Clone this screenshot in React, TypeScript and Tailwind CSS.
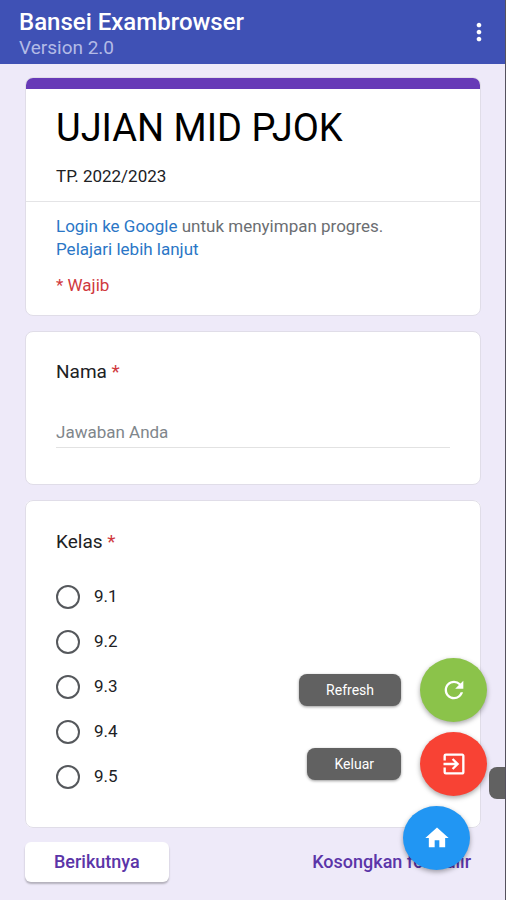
import { MdExitToApp, MdHome, MdMoreVert, MdRefresh } from "react-icons/md";

const classes = ["9.1", "9.2", "9.3", "9.4", "9.5"];

const actions = [
  { label: "Refresh", color: "bg-[#8bc34a]", icon: <MdRefresh size={28} /> },
  { label: "Keluar", color: "bg-[#f84234]", icon: <MdExitToApp size={28} /> },
];

const fab =
  "flex h-16 w-[67px] items-center justify-center rounded-[50%] text-white shadow-[0_2px_5px_rgba(0,0,0,0.35)]";
const card = "rounded-lg border border-[#e0dde8] bg-white";

function Header() {
  return (
    <header className="flex h-16 items-center justify-between bg-[#3f51b5] pr-3 pl-[19px]">
      <div className="pt-1">
        <h1 className="text-2xl leading-7 font-medium text-white">
          Bansei Exambrowser
        </h1>
        <p className="text-[19px] leading-6 text-[#b3bbe6]">Version 2.0</p>
      </div>
      <button type="button" aria-label="Menu" className="text-white">
        <MdMoreVert size={28} />
      </button>
    </header>
  );
}

function Required() {
  return <span className="text-[#d0393e]"> *</span>;
}

function FloatingActions() {
  return (
    <div className="absolute right-[18px] bottom-[30px] flex flex-col gap-[10px]">
      {actions.map((a) => (
        <div key={a.label} className="flex items-center justify-end gap-[19px]">
          <span className="rounded-lg bg-[#616161] px-[27px] py-[6px] text-sm leading-5 text-white shadow-[0_1px_3px_rgba(0,0,0,0.4)]">
            {a.label}
          </span>
          <button type="button" aria-label={a.label} className={`${fab} ${a.color}`}>
            {a.icon}
          </button>
        </div>
      ))}
      <button
        type="button"
        aria-label="Beranda"
        className={`${fab} mr-[17px] self-end bg-[#2196f3]`}
      >
        <MdHome size={28} />
      </button>
    </div>
  );
}

export default function App() {
  return (
    <div className="relative min-h-screen overflow-hidden border-r border-[#55525e] bg-[#eeeaf9] font-['Roboto','Liberation_Sans',sans-serif]">
      <Header />

      <form className="px-6 pt-[13px] pb-4 pl-[25px]" onSubmit={(e) => e.preventDefault()}>
        <section className={`${card} overflow-hidden`}>
          <div className="h-[11px] bg-[#673ab7]" />
          <div className="border-b border-[#e4e4e6] px-[30px] pt-4 pb-[13px]">
            <h2 className="text-[38px] leading-[46px] text-black">UJIAN MID PJOK</h2>
            <p className="mt-[13px] text-[17px] leading-6 text-[#202124]">TP. 2022/2023</p>
          </div>
          <div className="px-[30px] pt-[13px] pb-[18px] text-[17px] leading-[23px] text-[#6b6e72]">
            <p>
              <a href="#login" className="text-[#2a76c6]">
                Login ke Google
              </a>{" "}
              untuk menyimpan progres.
              <br />
              <a href="#info" className="text-[#2a76c6]">
                Pelajari lebih lanjut
              </a>
            </p>
            <p className="mt-[13px] text-[#d0393e]">* Wajib</p>
          </div>
        </section>

        <section className={`${card} mt-[15px] px-[30px] pt-7 pb-9`}>
          <label htmlFor="nama" className="block text-[19px] leading-6 text-[#202124]">
            Nama
            <Required />
          </label>
          <input
            id="nama"
            type="text"
            placeholder="Jawaban Anda"
            className="mt-8 block h-8 w-full border-b border-[#e2e2e2] text-[17px] text-[#202124] outline-none placeholder:text-[#80868b]"
          />
        </section>

        <fieldset className={`${card} mt-[15px] px-[30px] pt-[29px] pb-7`}>
          <legend className="float-left mb-5 w-full text-[19px] leading-6 text-[#202124]">
            Kelas
            <Required />
          </legend>
          {classes.map((c) => (
            <label
              key={c}
              className="clear-both flex h-[45px] items-center gap-[14px] text-[17px] text-[#202124]"
            >
              <input
                type="radio"
                name="kelas"
                value={c}
                className="size-6 appearance-none rounded-full border-2 border-[#55585c] checked:border-[7px] checked:border-[#673ab7]"
              />
              {c}
            </label>
          ))}
        </fieldset>

        <div className="mt-[14px] flex items-center justify-between pr-[10px]">
          <button
            type="submit"
            className="h-10 rounded-md bg-white px-[29px] text-lg font-medium text-[#5b35a8] shadow-[0_2px_2px_rgba(0,0,0,0.25)]"
          >
            Berikutnya
          </button>
          <button type="reset" className="text-lg font-medium text-[#5b35a8]">
            Kosongkan formulir
          </button>
        </div>
      </form>

      <FloatingActions />
      <div className="absolute right-0 bottom-[101px] h-8 w-4 rounded-l-lg bg-[#616161]" />
    </div>
  );
}
